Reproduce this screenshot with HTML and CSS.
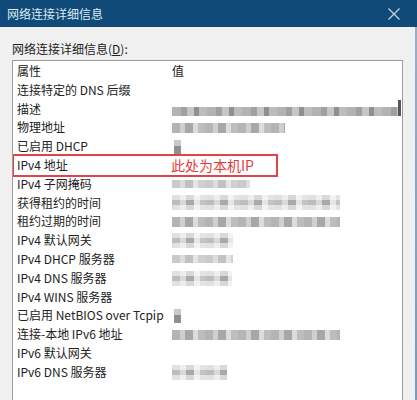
FILE: index.html
```html
<!DOCTYPE html>
<html lang="zh-CN">
<head>
<meta charset="utf-8">
<title>网络连接详细信息</title>
<link rel="stylesheet" href="styles.css">
</head>
<body>
<div class="titlebar">
  <span class="title">网络连接详细信息</span>
  <svg class="close" width="12" height="12" viewBox="0 0 12 12"><path d="M0.5 0.5 L11.5 11.5 M11.5 0.5 L0.5 11.5" stroke="#c9d6e3" stroke-width="1.2" fill="none"/></svg>
</div>
<div class="main">
  <div class="dialog">
    <div class="label">网络连接详细信息(<u>D</u>):</div>
    <div class="listbox">
      <div class="row"><span class="k">属性</span><span class="v">值</span></div>
      <div class="row"><span class="k">连接特定的 DNS 后缀</span><span class="v"></span></div>
      <div class="row"><span class="k">描述</span><span class="v"><span class="mosaic m-desc" style="width:226px"></span></span></div>
      <div class="row"><span class="k">物理地址</span><span class="v"><span class="mosaic m-mid" style="width:113px"></span></span></div>
      <div class="row"><span class="k">已启用 DHCP</span><span class="v"><span class="mosaic m-small"></span></span></div>
      <div class="row hl-row"><span class="k">IPv4 地址</span><span class="v"><span class="note">此处为本机IP</span></span><span class="highlight"></span></div>
      <div class="row"><span class="k">IPv4 子网掩码</span><span class="v"><span class="mosaic m-light" style="width:78px"></span></span></div>
      <div class="row"><span class="k">获得租约的时间</span><span class="v"><span class="mosaic m-tall" style="width:168px"></span></span></div>
      <div class="row"><span class="k">租约过期的时间</span><span class="v"><span class="mosaic m-mid" style="width:168px"></span></span></div>
      <div class="row"><span class="k">IPv4 默认网关</span><span class="v"><span class="mosaic m-tall" style="width:61px"></span></span></div>
      <div class="row"><span class="k">IPv4 DHCP 服务器</span><span class="v"><span class="mosaic m-light" style="width:61px"></span></span></div>
      <div class="row"><span class="k">IPv4 DNS 服务器</span><span class="v"><span class="mosaic m-tall" style="width:60px"></span></span></div>
      <div class="row"><span class="k">IPv4 WINS 服务器</span><span class="v"></span></div>
      <div class="row"><span class="k">已启用 NetBIOS over Tcpip</span><span class="v"><span class="mosaic m-small"></span></span></div>
      <div class="row"><span class="k">连接-本地 IPv6 地址</span><span class="v"><span class="mosaic m-mid" style="width:168px"></span></span></div>
      <div class="row"><span class="k">IPv6 默认网关</span><span class="v"></span></div>
      <div class="row"><span class="k">IPv6 DNS 服务器</span><span class="v"><span class="mosaic m-tall" style="width:55px"></span></span></div>
    </div>
  </div>
  <div class="edge"></div>
</div>
</body>
</html>
```
FILE: styles.css
```css
html, body {
  margin: 0;
  padding: 0;
}
body {
  width: 417px;
  height: 400px;
  overflow: hidden;
  background: #f0f0f0;
  font-family: "Noto Sans CJK SC", "Noto Sans", sans-serif;
  font-size: 12px;
  color: #222;
}
.titlebar {
  height: 27px;
  background: #0f4a78;
  display: flex;
  align-items: center;
  justify-content: space-between;
  padding: 0 17px 0 7px;
  color: #dfe8f1;
}
.title {
  font-size: 12px;
  line-height: 1;
}
.close {
  display: block;
}
.main {
  display: flex;
  height: 373px;
}
.dialog {
  flex: 1;
  display: flex;
  flex-direction: column;
  padding: 13px 12px 0 12px;
}
.edge {
  width: 2px;
  background: linear-gradient(180deg, #9aaec4, #7d97b4);
}
.label {
  line-height: 18px;
  height: 19px;
  color: #222;
}
.label u {
  text-decoration: underline;
  text-underline-offset: 1px;
}
.listbox {
  flex: 1;
  min-height: 0;
  overflow: hidden;
  margin-top: 1px;
  background: #fff;
  border: 1px solid #9c9c9c;
  border-bottom: none;
  padding-top: 1px;
  width: 389px;
}
.row {
  display: grid;
  grid-template-columns: 155px 1fr;
  height: 18.8px;
  line-height: 18.8px;
  padding-left: 4px;
  position: relative;
  white-space: nowrap;
}
.k, .v {
  display: flex;
  align-items: center;
}
.note {
  color: #e53a3a;
  font-size: 14px;
  margin-left: -1px;
}
.highlight {
  position: absolute;
  left: -1px;
  top: -2px;
  width: 262px;
  height: 19px;
  border: 2px solid #e2434b;
  pointer-events: none;
}
.mosaic {
  display: block;
  height: 9px;
  filter: blur(0.7px);
  background:
    repeating-linear-gradient(90deg, #b4b4b4 0 8px, #cfcfcf 8px 13px, #a7a7a7 13px 21px, #dcdcdc 21px 26px, #bdbdbd 26px 33px);
}
.m-desc {
  height: 16px;
  margin-top: -2px;
  background:
    linear-gradient(180deg, rgba(255,255,255,0.85) 0 6px, rgba(255,255,255,0) 6px),
    repeating-linear-gradient(90deg, #b3b3b3 0 9px, #a0a0a0 9px 15px, #c6c6c6 15px 22px, #8f8f8f 22px 27px, #bcbcbc 27px 35px),
    #fff;
  background-size: 100% 100%, 100% 9px, 100% 100%;
  background-position: 0 0, 0 7px, 0 0;
  background-repeat: no-repeat;
  border-right: 3px solid #555;
}
.m-mid {
  height: 10px;
}
.m-light {
  height: 8px;
  opacity: 0.7;
}
.m-tall {
  height: 15px;
  background:
    repeating-linear-gradient(180deg, rgba(255,255,255,0.55) 0 5px, rgba(255,255,255,0) 5px 10px),
    repeating-linear-gradient(90deg, #bdbdbd 0 8px, #d9d9d9 8px 14px, #a9a9a9 14px 22px, #e5e5e5 22px 28px, #c4c4c4 28px 34px);
}
.m-small {
  width: 7px;
  height: 14px;
  margin-left: 2px;
  background: linear-gradient(180deg, #c9c9c9 0 6px, #8f8f8f 6px 14px);
}
```
